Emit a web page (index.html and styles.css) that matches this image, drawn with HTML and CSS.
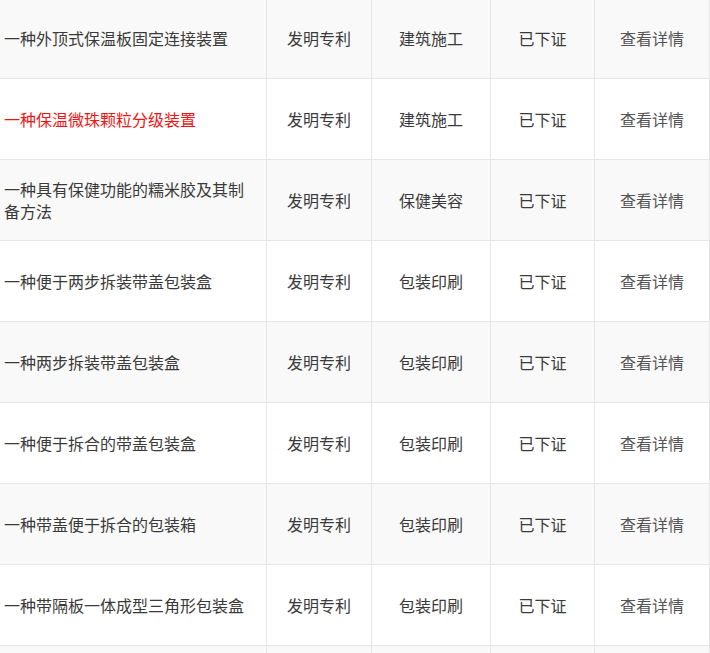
FILE: index.html
```html
<!DOCTYPE html>
<html lang="zh-CN">
<head>
<meta charset="utf-8">
<title>专利列表</title>
<link rel="stylesheet" href="styles.css">
</head>
<body>
<div class="table">
  <div class="row odd">
    <div class="cell name">一种外顶式保温板固定连接装置</div>
    <div class="cell">发明专利</div>
    <div class="cell">建筑施工</div>
    <div class="cell">已下证</div>
    <div class="cell link">查看详情</div>
  </div>
  <div class="row">
    <div class="cell name hot">一种保温微珠颗粒分级装置</div>
    <div class="cell">发明专利</div>
    <div class="cell">建筑施工</div>
    <div class="cell">已下证</div>
    <div class="cell link">查看详情</div>
  </div>
  <div class="row odd">
    <div class="cell name">一种具有保健功能的糯米胶及其制备方法</div>
    <div class="cell">发明专利</div>
    <div class="cell">保健美容</div>
    <div class="cell">已下证</div>
    <div class="cell link">查看详情</div>
  </div>
  <div class="row">
    <div class="cell name">一种便于两步拆装带盖包装盒</div>
    <div class="cell">发明专利</div>
    <div class="cell">包装印刷</div>
    <div class="cell">已下证</div>
    <div class="cell link">查看详情</div>
  </div>
  <div class="row odd">
    <div class="cell name">一种两步拆装带盖包装盒</div>
    <div class="cell">发明专利</div>
    <div class="cell">包装印刷</div>
    <div class="cell">已下证</div>
    <div class="cell link">查看详情</div>
  </div>
  <div class="row">
    <div class="cell name">一种便于拆合的带盖包装盒</div>
    <div class="cell">发明专利</div>
    <div class="cell">包装印刷</div>
    <div class="cell">已下证</div>
    <div class="cell link">查看详情</div>
  </div>
  <div class="row odd">
    <div class="cell name">一种带盖便于拆合的包装箱</div>
    <div class="cell">发明专利</div>
    <div class="cell">包装印刷</div>
    <div class="cell">已下证</div>
    <div class="cell link">查看详情</div>
  </div>
  <div class="row">
    <div class="cell name">一种带隔板一体成型三角形包装盒</div>
    <div class="cell">发明专利</div>
    <div class="cell">包装印刷</div>
    <div class="cell">已下证</div>
    <div class="cell link">查看详情</div>
  </div>
  <div class="row odd">
    <div class="cell name"></div>
    <div class="cell"></div>
    <div class="cell"></div>
    <div class="cell"></div>
    <div class="cell link"></div>
  </div>
</div>
</body>
</html>
```
FILE: styles.css
```css
html, body {
  margin: 0;
  padding: 0;
  background: #ffffff;
  overflow: hidden;
}
body {
  font-family: "Noto Sans CJK SC", "Liberation Sans", sans-serif;
  font-size: 16px;
  color: #3a3a3a;
}
.table {
  margin: -3px 0 0 -1px;
  width: 711px;
  border-left: 1px solid #e6e6e6;
  border-top: 1px solid #e6e6e6;
}
.row {
  display: grid;
  grid-template-columns: 267px 105px 119px 104px 115px;
  height: 81px;
}
.row.odd {
  background: #f9f9f9;
}
.cell {
  box-sizing: border-box;
  border-right: 1px solid #e6e6e6;
  border-bottom: 1px solid #e6e6e6;
  display: flex;
  align-items: center;
  justify-content: center;
  text-align: center;
  line-height: 22px;
}
.cell.name {
  justify-content: flex-start;
  text-align: left;
  padding: 0 12px 0 4px;
}
.cell.hot {
  color: #f01414;
}
.cell.link {
  color: #555555;
}
```
